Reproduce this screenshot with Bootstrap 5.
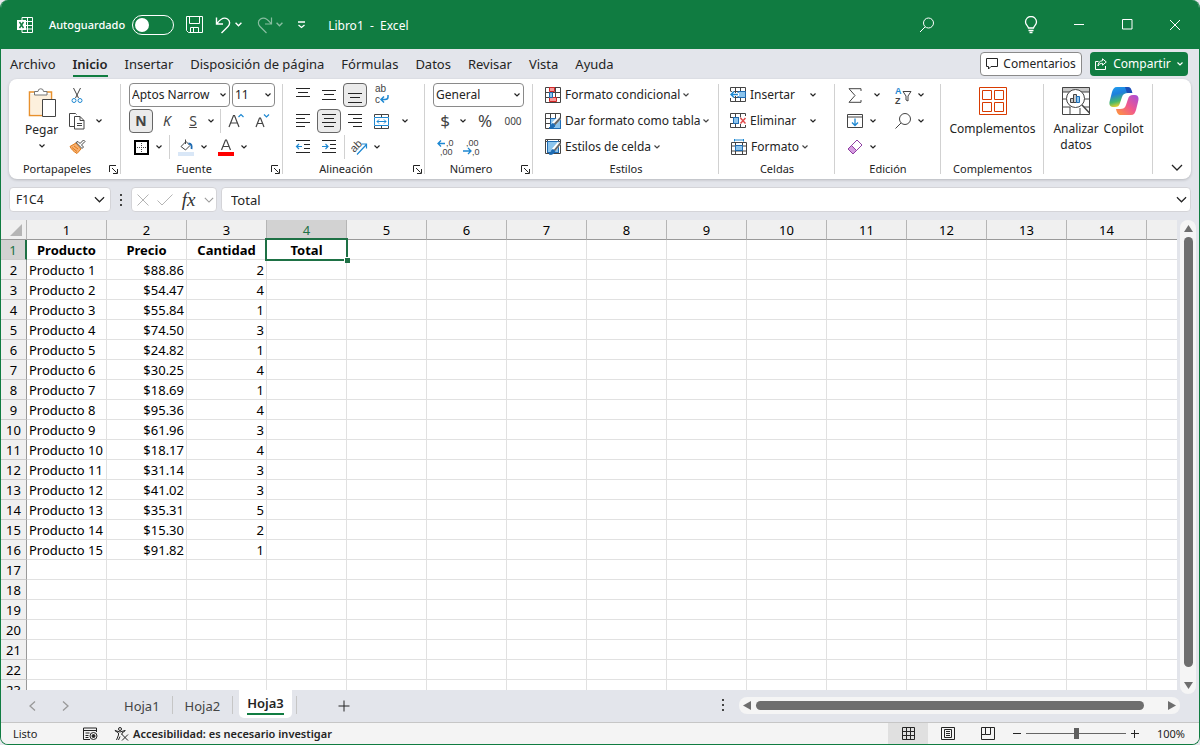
<!DOCTYPE html>
<html lang="es">
<head>
<meta charset="utf-8">
<meta name="viewport" content="width=device-width, initial-scale=1">
<title>Libro1 - Excel</title>
<link href="https://cdn.jsdelivr.net/npm/bootstrap@5.3.0/dist/css/bootstrap.min.css" rel="stylesheet">
<style>
:root { --xl-green:#107c41; --xl-sel:#1e7145; --xl-ink:#242424; --xl-bg:#e3e5eb; --xl-blue:#1e88d2; }
body { font-family:"Noto Sans","Open Sans",sans-serif; font-size:12px; line-height:16px; color:var(--xl-ink); background:#e8e8ee; }
button, input, select { font:inherit; color:inherit; }
button { border:0; background:none; padding:0; }
svg { display:block; flex:none; fill:none; stroke:currentColor; }
.win { height:100vh; background:var(--xl-bg); border:1px solid var(--xl-green); border-top:0; border-radius:8px; overflow:hidden; }
.titlebar { background:var(--xl-green); height:49px; margin:0 -1px; padding-right:1px; color:#fff; flex:none; }
.autosave { font-size:11px; font-weight:500; margin-left:15px; }
.toggle { appearance:none; width:42px; height:20px; border:1px solid #fff; border-radius:10px; margin:0 0 0 7px; }
.toggle::before { content:""; display:block; width:14px; height:14px; margin:2px; border-radius:50%; background:#fff; }
.doc-name { margin-left:22px; padding-top:2px; }
.chev-btn { width:12px; height:24px; display:flex; align-items:center; justify-content:center; flex:none; }
.caption-btn { width:48px; height:48px; display:flex; align-items:center; justify-content:center; }
.search-btn { margin-right:56px; }

.menubar { height:30px; font-size:13px; line-height:20px; padding:0 3px 0 9px; flex:none; }
.menus { gap:17px; padding-top:2px; }
.menubar a { color:var(--xl-ink); text-decoration:none; padding-bottom:1px; border-bottom:2px solid transparent; white-space:nowrap; }
.menubar a.current { font-weight:600; border-color:var(--xl-green); }
.pill { height:24px; border-radius:4px; display:flex; align-items:center; padding:0 5px; gap:5px; white-space:nowrap; font-size:12px; }
.pill-line { background:#fff; border:1px solid #8a8a8a; width:102px; justify-content:center; }
.pill-fill { background:var(--xl-green); color:#fff; width:98px; justify-content:space-between; }

.ribbon { background:#fff; margin:0 8px; height:100px; border-radius:8px; box-shadow:0 1px 3px #0003; flex:none; }
.rgroup { height:94px; margin-top:3px; background:linear-gradient(#d1d1d1,#d1d1d1) right 2px/1px 90px no-repeat; padding:0 8px; display:flex; flex-direction:column; flex:none; }
.rrow { height:26px; display:flex; align-items:center; flex:none; }
.rlabel { margin-top:auto; text-align:center; position:relative; height:14px; line-height:14px; font-size:11px; }
.launch { position:absolute; right:-5px; top:3px; }
.w-clip { width:112px; } .w-font { width:162px; } .w-align { width:142px; } .w-num { width:108px; }
.w-style { width:186px; } .w-cell { width:116px; } .w-edit { width:106px; } .w-add { width:103px; } .w-data { width:109px; }
.ib { width:24px; height:24px; display:flex; align-items:center; justify-content:center; border-radius:4px; flex:none; border:1px solid transparent; }
.ib svg { overflow:visible; }
.ib.on { background:#ebebeb; border-color:#666; }
.ib-k { font-size:14px; color:#444; }
.tiny { font-family:"Liberation Sans",sans-serif; fill:#444; stroke:none; }
.tiny.blue { fill:#1e88d2; }
.vsep { width:1px; height:24px; background:#d1d1d1; flex:none; }
.pick { appearance:none; height:24px; border:1px solid #8a8a8a; border-radius:4px; padding:0 0 0 2px; line-height:20px; background:#fff url("data:image/svg+xml,%3Csvg xmlns='http://www.w3.org/2000/svg' width='6' height='4'%3E%3Cpath d='M.5.5 3 3 5.500.5' fill='none' stroke='%23242424' stroke-width='1.2'/%3E%3C/svg%3E") no-repeat right 3px center; }
.pick-font { width:101px; } .pick-size { width:43px; } .pick-num { width:91px; }
.cmd { display:flex; align-items:center; gap:4px; white-space:nowrap; height:24px; }
.cmd svg { color:#444; }
.cmd svg:last-child { margin-left:-1px; }
.big { display:flex; flex-direction:column; align-items:center; gap:4px; line-height:16px; }
.gap2 { gap:2px; }
.gap2 .chev-btn { margin-left:-2px; }
.gap2 .vsep { margin:0 1px; }
.lead-in { margin-left:12px; }
.big-tall { margin:5px auto 0; gap:6px; }
.data-btns { gap:2px; }
.big-paste { margin:5px 0 0 8px; gap:3px; }
.big-paste svg:last-child { margin-top:3px; }
.clip-tools { margin-left:7px; }
.second-col { margin-left:12px; }
.fs-cur { font-size:17px; color:#444; } .fs-mil { font-size:10px; color:#444; }

.fbar { height:41px; padding:8px 8px 8px; flex:none; }
.fbox { background:#fff; border:1px solid #d4d4d8; border-radius:4px; height:25px; display:flex; align-items:center; }
.fbox input { border:0; outline:0; background:none; min-width:0; flex:1; padding:0 0 0 6px; }
.dots { margin:0 7px 0 7px; }
.namebox { width:102px; padding-right:5px; } .fxbox { width:86px; padding:0 2px 0 5px; } .formula { font-size:13px; margin-left:4px; padding:0 3px; }
.fx-glyph { font:italic 19px/20px "Liberation Serif",serif; color:#333; }

.grid-wrap { flex:1 1 0; min-height:0; }
.sheet-view { flex:1 1 0; min-width:0; overflow:hidden; background:#fff; }
.sheet { table-layout:fixed; border-collapse:separate; border-spacing:0; font-size:13px; line-height:17px; color:#000; width:max-content; }
.sheet th, .sheet td { height:20px; padding:2px 2px 0; border-right:1px solid #e1e1e1; border-bottom:1px solid #e1e1e1; white-space:nowrap; }
.sheet thead th { background:#f0f0f0; border-right-color:#b5b5b5; border-bottom-color:#999; font-weight:400; text-align:center; }
.sheet tbody th { background:#f0f0f0; border-right-color:#999; border-bottom-color:#ccc; font-weight:400; text-align:center; padding:2px 0 0; }
.sheet thead th.hot, .sheet tbody th.hot { background:#d2d2d2; color:var(--xl-sel); }
.sheet tbody th.hot { border-right:2px solid var(--xl-sel); }
.c-head { width:26px; } .c-data { width:80px; }
.sheet td.title { font-weight:700; text-align:center; }
.sheet td.num { text-align:right; }
.sheet td.active { position:relative; }
.frame { position:absolute; inset:-2px; border:2px solid var(--xl-sel); }
.frame::after { content:""; position:absolute; right:-4px; bottom:-4px; width:6px; height:6px; background:var(--xl-sel); border:solid #fff; border-width:1px 0 0 1px; }
.vscroll { width:16px; margin:0 3px -4px; background:#f5f5f5; border-radius:8px; padding:5px 0; gap:5px; }
.thumb-v { width:9px; flex:1; background:#6e6e6e; border-radius:5px; margin-bottom:10px; }
.hscroll { width:441px; height:17px; background:#f5f5f5; border-radius:8px; padding:0 4px; }
.thumb-h { height:9px; flex:1; background:#6e6e6e; border-radius:5px; margin:0 24px 0 5px; }

.tabs { height:33px; border-bottom:1px solid #c6c6c6; font-size:13px; flex:none; }
.stab { height:32px; padding:0 12px; display:flex; align-items:center; color:#444; text-decoration:none; }
.stab.current { background:#fff; height:28px; padding:0 8px; margin:0 4px 0 6px; border-radius:0 0 5px 5px; font-weight:600; color:var(--xl-ink); }
.stab.current span { border-bottom:2px solid var(--xl-green); line-height:20px; }
.tsep { width:1px; height:18px; background:#c6c6c6; margin-top:6px; }
.tab-nav { height:32px; padding-left:28px; gap:26px; width:111px; }
.plus { height:32px; margin-left:41px; }
.hs-wrap { gap:13px; padding:0 19px 2px 0; }

.status { height:21px; background:#f4f4f4; font-size:11px; padding:0 14px 0 12px; flex:none; }
.view { width:40px; height:21px; display:flex; align-items:center; justify-content:center; }
.view.on { background:#e0e0e0; }
.zoom { appearance:none; width:100px; height:12px; background:linear-gradient(#666,#666) center/100% 1px no-repeat; margin:0; }
.zoom::-webkit-slider-thumb { appearance:none; width:5px; height:11px; background:#5f5f5f; }
.ready { width:70px; }
.zbtn { width:8px; margin:0 5px; }
.pct { width:41px; text-align:right; }
.a11y { font-weight:600; }
</style>
</head>
<body>
<svg width="0" height="0" class="position-absolute" aria-hidden="true">
  <symbol id="chev" viewBox="0 0 6 4"><path d="M.5.5 3 3 5.500.5" stroke-width="1.2"/></symbol>
  <symbol id="chev-l" viewBox="0 0 12 7"><path d="M1 1l5 5 5-5" stroke-width="1.3"/></symbol>
  <symbol id="launch" viewBox="0 0 9 9"><path d="M.5 7V.5H7M3 3l4.500 4.500M8.500 4v4.500H4"/></symbol>
  <symbol id="grid3" viewBox="0 0 16 16"><path d="M.5.500h15v15H.5zM.5 5.500h15M.5 10.500h15M5.500.500v15M10.500.500v15"/></symbol>
</svg>

<div class="win d-flex flex-column">
  <header class="titlebar d-flex align-items-center">
    <svg class="ms-3" width="18" height="18" viewBox="0 0 18 18"><path d="M6 4V1.500h10.500v15H6V14M10 5.500h6.500M10 9.500h6.500M10 13h6.500M11.500 1.500v15"/><path d="M1 4h9v10H1z" fill="#fff" stroke="none"/><path d="M3.500 6l4 6M7.500 6l-4 6" stroke="#107c41" stroke-width="1.400"/></svg>
    <label for="autosave" class="autosave">Autoguardado</label>
    <input id="autosave" type="checkbox" role="switch" class="toggle">
    <button class="ms-2 ps-1" aria-label="Guardar"><svg width="17" height="17" viewBox="0 0 17 17"><path d="M.5.500h16v16H2.500l-2-2zM3.500.500v7h10v-7M4.500 16.500v-5h8v5M7.500 12v4.500"/></svg></button>
    <button class="ms-2 ps-1" aria-label="Deshacer"><svg width="17" height="18" viewBox="0 0 17 18"><path d="M1.500 1.500v6.500h6.500M2 7.500C5 3.500 9 .8 12.500 3c3 2 2.500 5.500.5 7.500L6.500 17" stroke-width="1.400"/></svg></button>
    <button class="chev-btn" aria-label="Opciones de deshacer"><svg width="7" height="5"><use href="#chev"/></svg></button>
    <button class="ms-2 ps-1 opacity-50" aria-label="Rehacer" disabled><svg width="17" height="18" viewBox="0 0 17 18"><path d="M15.500 1.500v6.500H9M15 7.500C12 3.500 8 .8 4.500 3c-3 2-2.500 5.500-.5 7.500l6.500 6.500" stroke="#fff" stroke-width="1.200"/></svg></button>
    <button class="chev-btn opacity-50" aria-label="Opciones de rehacer"><svg width="7" height="5"><use href="#chev"/></svg></button>
    <button class="ms-2 ps-1" aria-label="Personalizar barra"><svg width="9" height="8" viewBox="0 0 9 8"><path d="M1 1h7M1.500 4l3 2.500 3-2.500" stroke-width="1.300"/></svg></button>
    <div class="doc-name">Libro1 &nbsp;-&nbsp; Excel</div>
    <div class="ms-auto d-flex align-items-center">
      <button class="caption-btn search-btn" aria-label="Buscar"><svg width="16" height="16" viewBox="0 0 16 16"><circle cx="9.500" cy="6" r="5"/><path d="M6 10L1 15"/></svg></button>
      <button class="caption-btn" aria-label="Ideas"><svg width="14" height="18" viewBox="0 0 14 18"><path d="M4.500 12C4 9.800 1.500 9 1.500 6a5.500 5.500 0 0111 0c0 3-2.500 3.800-3 6zM4.500 14.500h5M5.500 16.500h3" stroke-width="1.300"/></svg></button>
      <button class="caption-btn" aria-label="Minimizar"><svg width="10" height="2" viewBox="0 0 10 2"><path d="M0 .500h10"/></svg></button>
      <button class="caption-btn" aria-label="Maximizar"><svg width="11" height="11" viewBox="0 0 11 11"><path d="M.500.500h9.500v9.500H.500z"/></svg></button>
      <button class="caption-btn" aria-label="Cerrar"><svg width="12" height="12" viewBox="0 0 12 12"><path d="M1 1l10 10M11 1L1 11"/></svg></button>
    </div>
  </header>

  <nav class="menubar d-flex align-items-center">
    <div class="d-flex menus">
      <a href="#">Archivo</a><a href="#" class="current">Inicio</a><a href="#">Insertar</a><a href="#">Disposición de página</a><a href="#">Fórmulas</a><a href="#">Datos</a><a href="#">Revisar</a><a href="#">Vista</a><a href="#">Ayuda</a>
    </div>
    <div class="ms-auto d-flex gap-2 me-2">
      <button class="pill pill-line"><svg width="12" height="12" viewBox="0 0 12 12"><path d="M.5.500h11v8H5l-2.500 2.500V8.500h-2z"/></svg>Comentarios</button>
      <button class="pill pill-fill"><svg width="12" height="12" viewBox="0 0 12 12"><path d="M3.500 3.500h-3v8h10V8M7.500.800L11.300 4 7.500 7.200V5.300C5.500 5.300 4 6 3 8c0-3 1.500-5 4.500-5.300z"/></svg>Compartir <svg width="6" height="4"><use href="#chev"/></svg></button>
    </div>
  </nav>

  <section class="ribbon d-flex">
    <div class="rgroup w-clip">
      <div class="d-flex align-items-start">
        <button class="big big-paste"><svg width="30" height="32" viewBox="0 0 30 32"><path d="M8 5H2.500v23.500H15M20 5h4.500v8" stroke="#e8912d" stroke-width="1.500"/><path d="M4 7v20h11V12h8V7z" fill="#fdf0dd" stroke="none"/><path d="M7.500 8V4.500h3.500a2.500 2.500 0 015.500 0H20V8z" fill="#fff" stroke="#777"/><path d="M15.500 12.500h13v17h-13z" fill="#fff" stroke="#444"/></svg><span>Pegar</span><svg width="6" height="4"><use href="#chev"/></svg></button>
        <div class="clip-tools">
          <div class="rrow"><button class="ib" aria-label="Cortar"><svg width="12" height="17" viewBox="0 0 12 17"><path d="M2.500 1l5 10M9.500 1l-5 10" stroke="#444"/><circle cx="3" cy="13.500" r="2" stroke="#1e88d2"/><circle cx="9" cy="13.500" r="2" stroke="#1e88d2"/></svg></button></div>
          <div class="rrow"><button class="ib" aria-label="Copiar"><svg width="16" height="17" viewBox="0 0 16 17"><path d="M5 13.500H.5V.500h6l1 1M5.500 3.500h5.500l4 4v8.500H5.500zM11 3.500v4h4M8 10.500h5M8 12.500h5" stroke="#444"/></svg></button><button class="chev-btn ms-1" aria-label="Opciones de copiar"><svg width="6" height="4"><use href="#chev"/></svg></button></div>
          <div class="rrow"><button class="ib" aria-label="Copiar formato"><svg width="17" height="16" viewBox="0 0 17 16"><path d="M7 4L1 7.500c1.500 3 3.500 5 7 7L12 10z" fill="#f7b070" stroke="#e07b1a"/><path d="M3 8.500l5 4M5 7l4 3" stroke="#e07b1a"/><path d="M7 3.500l6 6 1.500-1.500-2-2L16 2.500 14.500 1 11 4.500l-2-2z" fill="#fff" stroke="#444"/></svg></button></div>
        </div>
      </div>
      <div class="rlabel pe-3">Portapapeles<svg class="launch" width="9" height="9"><use href="#launch"/></svg></div>
    </div>

    <div class="rgroup w-font">
      <div class="rrow gap2"><select class="pick pick-font" aria-label="Fuente"><option>Aptos Narrow</option></select><select class="pick pick-size" aria-label="Tamaño"><option>11</option></select></div>
      <div class="rrow gap2"><button class="ib ib-k on fw-bold">N</button><button class="ib ib-k fst-italic">K</button><button class="ib ib-k text-decoration-underline">S</button><button class="chev-btn" aria-label="Subrayado"><svg width="6" height="4"><use href="#chev"/></svg></button><span class="vsep"></span><button class="ib" aria-label="Aumentar fuente"><svg width="16" height="15" viewBox="0 0 16 15"><path d="M1 13L5.500 1.500h1L11 13M2.500 9h7" stroke="#444" stroke-width="1.200"/><path d="M10.500 3L13 .5 15.500 3" stroke="#1e88d2" stroke-width="1.200"/></svg></button><button class="ib" aria-label="Disminuir fuente"><svg width="16" height="15" viewBox="0 0 16 15"><path d="M2 13L5.500 4h1L10 13M3 9.500h6" stroke="#444" stroke-width="1.200"/><path d="M10 .5L12.500 3 15 .5" stroke="#1e88d2" stroke-width="1.200"/></svg></button></div>
      <div class="rrow"><button class="ib" aria-label="Bordes"><svg width="15" height="15" viewBox="0 0 15 15"><path d="M1 1h13v13H1z" stroke="#000" stroke-width="2"/><path d="M7.500 3v9M3 7.500h9" stroke="#444" stroke-dasharray="1 1"/></svg></button><button class="chev-btn" aria-label="Opciones de bordes"><svg width="6" height="4"><use href="#chev"/></svg></button><span class="vsep mx-1"></span><button class="ib" aria-label="Color de relleno"><svg width="16" height="17" viewBox="0 0 16 17"><path d="M3 7.500l5-5 4 4L7.500 11zM7.500 5V.500" stroke="#444"/><path d="M10.500 4.500c3 0 3.500 2 3 5.500" stroke="#1e6cb4" stroke-width="1.800"/><path d="M0 13h16v4H0z" fill="#d9e7f7" stroke="none"/></svg></button><button class="chev-btn" aria-label="Opciones de relleno"><svg width="6" height="4"><use href="#chev"/></svg></button><button class="ib ms-1" aria-label="Color de fuente"><svg width="16" height="17" viewBox="0 0 16 17"><path d="M3.500 11L7.500 1h1l4 10M5 7.500h6" stroke="#444" stroke-width="1.200"/><path d="M0 13h16v4H0z" fill="#f00" stroke="none"/></svg></button><button class="chev-btn" aria-label="Opciones de color"><svg width="6" height="4"><use href="#chev"/></svg></button></div>
      <div class="rlabel pe-3">Fuente<svg class="launch" width="9" height="9"><use href="#launch"/></svg></div>
    </div>

    <div class="rgroup w-align">
      <div class="rrow gap2"><button class="ib" aria-label="Arriba"><svg width="14" height="14" viewBox="0 0 14 14"><path d="M0 .500h14M2 4.500h10M0 8.500h14"/></svg></button><button class="ib" aria-label="Medio"><svg width="14" height="14" viewBox="0 0 14 14"><path d="M0 2.500h14M2 6.500h10M0 11.500h14"/></svg></button><button class="ib on" aria-label="Abajo"><svg width="14" height="14" viewBox="0 0 14 14"><path d="M0 5.500h14M2 9.500h10M0 14.500h14"/></svg></button><button class="ib" aria-label="Ajustar texto"><svg width="16" height="18" viewBox="0 0 16 18"><text x="2" y="6" font-size="10" class="tiny">ab</text><text x="2" y="17" font-size="10" class="tiny">c</text><path d="M15 9v2q0 2.500-3 2.500H8M11 10.500l-3 3 3 3" stroke="#1e88d2" stroke-width="1.500"/></svg></button></div>
      <div class="rrow gap2"><button class="ib" aria-label="Izquierda"><svg width="14" height="14" viewBox="0 0 14 14"><path d="M0 .500h14M0 4.500h9M0 8.500h14M0 12.500h9"/></svg></button><button class="ib on" aria-label="Centro"><svg width="14" height="14" viewBox="0 0 14 14"><path d="M0 .500h14M2 4.500h10M0 8.500h14M2 12.500h10"/></svg></button><button class="ib" aria-label="Derecha"><svg width="14" height="14" viewBox="0 0 14 14"><path d="M0 .500h14M5 4.500h9M0 8.500h14M5 12.500h9"/></svg></button><button class="ib" aria-label="Combinar"><svg width="15" height="15" viewBox="0 0 15 15"><path d="M.5 3V.500h14V3M.5 12v2.500h14V12M7.500.500V3M7.500 12v2.500" stroke="#444"/><path d="M.500 3.500h14v8H.500zM3 7.500h9M5 5.500l-2 2 2 2M10 5.500l2 2-2 2" stroke="#1e88d2"/></svg></button><button class="chev-btn ms-1" aria-label="Opciones de combinar"><svg width="6" height="4"><use href="#chev"/></svg></button></div>
      <div class="rrow gap2"><button class="ib" aria-label="Disminuir sangría"><svg width="14" height="14" viewBox="0 0 14 14"><path d="M0 .500h14M8 4.500h6M8 8.500h6M0 12.500h14"/><path d="M6 6.500H.800M3 4L.500 6.500 3 9" stroke="#1e88d2" stroke-width="1.200"/></svg></button><button class="ib" aria-label="Aumentar sangría"><svg width="14" height="14" viewBox="0 0 14 14"><path d="M0 .500h14M8 4.500h6M8 8.500h6M0 12.500h14"/><path d="M0 6.500h5.500M3.500 4L6 6.500 3.500 9" stroke="#1e88d2" stroke-width="1.200"/></svg></button><span class="vsep me-0"></span><button class="ib" aria-label="Orientación"><svg width="17" height="16" viewBox="0 0 17 16"><text x="0" y="12" font-size="11" class="tiny" transform="rotate(-45 4 9)">ab</text><path d="M6 15.500l9.500-10M11 5h4.500v4.500" stroke="#1e88d2" stroke-width="1.200"/></svg></button><button class="chev-btn" aria-label="Opciones de orientación"><svg width="6" height="4"><use href="#chev"/></svg></button></div>
      <div class="rlabel pe-3">Alineación<svg class="launch" width="9" height="9"><use href="#launch"/></svg></div>
    </div>

    <div class="rgroup w-num">
      <div class="rrow"><select class="pick pick-num" aria-label="Formato de número"><option>General</option></select></div>
      <div class="rrow"><button class="ib fs-cur">$</button><button class="chev-btn" aria-label="Moneda"><svg width="6" height="4"><use href="#chev"/></svg></button><button class="ib fs-cur ms-1">%</button><button class="ib fs-mil ms-1">000</button></div>
      <div class="rrow gap2"><button class="ib" aria-label="Aumentar decimales"><svg width="17" height="16" viewBox="0 0 17 16"><text x="9" y="7" font-size="9" class="tiny">,0</text><text x="3" y="16" font-size="9" class="tiny">,00</text><path d="M8 4.500H1M4 1.500l-3 3 3 3" stroke="#1e88d2" stroke-width="1.300"/></svg></button><button class="ib" aria-label="Disminuir decimales"><svg width="17" height="16" viewBox="0 0 17 16"><text x="3" y="7" font-size="9" class="tiny">,00</text><text x="9" y="16" font-size="9" class="tiny">,0</text><path d="M0 12h8M5 9l3 3-3 3" stroke="#1e88d2" stroke-width="1.300"/></svg></button></div>
      <div class="rlabel pe-3">Número<svg class="launch" width="9" height="9"><use href="#launch"/></svg></div>
    </div>

    <div class="rgroup w-style px-0">
      <div class="rrow"><button class="cmd lead-in"><svg width="16" height="16" viewBox="0 0 16 16"><use href="#grid3"/><path d="M4.500.500h5v4h-5zM4.500 10.500h7v4h-7z" fill="#f59a9a" stroke="#d12626"/><path d="M4.500 5.500h3v5h-3z" fill="#8cc4ec" stroke="#1e6cb4"/></svg>Formato condicional<svg width="6" height="4"><use href="#chev"/></svg></button></div>
      <div class="rrow"><button class="cmd lead-in"><svg width="16" height="16" viewBox="0 0 16 16"><use href="#grid3"/><path d="M5.500 5.500h10v10h-10z" fill="#8cc4ec" stroke="#1e6cb4"/><path d="M14.500 5l-6 6" stroke="#fff" stroke-width="4"/><path d="M15.500 5l-6 6.500" stroke="#666" stroke-width="2"/><path d="M9 11q2 2-.500 3.500T4 15q2-1 2.500-3T9 11z" fill="#1e6cb4" stroke="#1e6cb4"/></svg>Dar formato como tabla<svg width="6" height="4"><use href="#chev"/></svg></button></div>
      <div class="rrow"><button class="cmd lead-in"><svg width="16" height="16" viewBox="0 0 16 16"><path d="M.5.5h15v14H.5zM2.500.5v14M13.500.5v14M.5 2.500h15"/><path d="M2.500 2.500h11v11h-11z" fill="#8cc4ec" stroke="#1e6cb4"/><path d="M14.500 4l-6 7" stroke="#fff" stroke-width="4"/><path d="M15.500 4l-6 7.500" stroke="#666" stroke-width="2"/><path d="M9 11q2 2-.500 3.500T4 15q2-1 2.500-3T9 11z" fill="#1e6cb4" stroke="#1e6cb4"/></svg>Estilos de celda<svg width="6" height="4"><use href="#chev"/></svg></button></div>
      <div class="rlabel">Estilos</div>
    </div>

    <div class="rgroup w-cell px-0">
      <div class="rrow"><button class="cmd lead-in"><svg width="16" height="16" viewBox="0 0 16 16"><path d="M.5 4V.500h15v14H.500V11M5.500.500v14M10.500.500v14M.500 4.500h15M3 10.500h12.500"/><path d="M8 4.500h7.500v6H8z" fill="#8cc4ec" stroke="#1e6cb4"/><path d="M9 7.500H1M4 4.500l-3 3 3 3" stroke="#fff" stroke-width="3"/><path d="M8 7.500H1M4 4.500l-3 3 3 3" stroke="#1e88d2" stroke-width="1.500"/></svg>Insertar</button><button class="chev-btn ms-auto me-3" aria-label="Opciones de insertar"><svg width="6" height="4"><use href="#chev"/></svg></button></div>
      <div class="rrow"><button class="cmd lead-in"><svg width="16" height="16" viewBox="0 0 16 16"><path d="M.5 4V.500h15V3M5.500.500v4M10.500.500v4M0 4.500h9M0 10.500h9M.500 11v3.500h15V12M5.500 11v3.500M10.500 11v3.500"/><path d="M3.500 4.500h5v6h-5z" fill="#8cc4ec" stroke="#1e6cb4"/><path d="M10.500 5l5 5.500M15.500 5l-5 5.500" stroke="#e04848" stroke-width="1.500"/></svg>Eliminar</button><button class="chev-btn ms-auto me-3" aria-label="Opciones de eliminar"><svg width="6" height="4"><use href="#chev"/></svg></button></div>
      <div class="rrow"><button class="cmd lead-in"><svg width="16" height="16" viewBox="0 0 16 16"><path d="M.500 3.500h15v12H.500zM.500 7h15M.500 12h15M4.500 3.500v12M11.500 3.500v12"/><path d="M4.500 6.500h7v5h-7z" fill="#8cc4ec" stroke="#1e6cb4"/><path d="M3.500 1h9M3.500 0v2.500M12.500 0v2.500" stroke="#1e88d2"/></svg>Formato<svg width="6" height="4"><use href="#chev"/></svg></button></div>
      <div class="rlabel">Celdas</div>
    </div>

    <div class="rgroup w-edit">
      <div class="rrow"><button class="ib" aria-label="Autosuma"><svg width="14" height="15" viewBox="0 0 14 15"><path d="M13 3V.700H1l6 6.800-6 6.800h12V12" stroke="#444"/></svg></button><button class="chev-btn ms-1" aria-label="Opciones de suma"><svg width="6" height="4"><use href="#chev"/></svg></button><button class="ib ms-2" aria-label="Ordenar y filtrar"><svg width="17" height="17" viewBox="0 0 17 17"><text x="0" y="7" font-size="9" font-weight="700" class="tiny blue">A</text><text x="0" y="17" font-size="9" font-weight="700" class="tiny">Z</text><path d="M8 4.500h8L13 9v5l-2-1V9z" stroke="#444"/></svg></button><button class="chev-btn" aria-label="Opciones de orden"><svg width="6" height="4"><use href="#chev"/></svg></button></div>
      <div class="rrow"><button class="ib" aria-label="Rellenar"><svg width="16" height="14" viewBox="0 0 16 14"><path d="M.500.500h15v13H.500zM.500 3h15" stroke="#444"/><path d="M8 4.500v7M5 8.500l3 3 3-3" stroke="#1e88d2" stroke-width="1.300"/></svg></button><button class="chev-btn" aria-label="Opciones de relleno"><svg width="6" height="4"><use href="#chev"/></svg></button><button class="ib second-col" aria-label="Buscar y seleccionar"><svg width="16" height="16" viewBox="0 0 16 16"><circle cx="10" cy="6" r="5.500" stroke="#444"/><path d="M6 10L.500 15.500" stroke="#444"/></svg></button><button class="chev-btn" aria-label="Opciones de búsqueda"><svg width="6" height="4"><use href="#chev"/></svg></button></div>
      <div class="rrow"><button class="ib" aria-label="Borrar"><svg width="16" height="16" viewBox="0 0 16 16"><path d="M10 1l5 5-9 9-5-5z" fill="#fff" stroke="#8f3ea3"/><path d="M4.500 6.500l5 5L6 15l-5-5z" fill="#d59be0" stroke="#8f3ea3"/></svg></button><button class="chev-btn" aria-label="Opciones de borrar"><svg width="6" height="4"><use href="#chev"/></svg></button></div>
      <div class="rlabel">Edición</div>
    </div>

    <div class="rgroup w-add">
      <button class="big big-tall"><svg width="28" height="28" viewBox="0 0 28 28"><path d="M.500.500h27v27H.500zM3.500 3.500h9v9h-9zM15.500 3.500h9v9h-9zM3.500 15.500h9v9h-9zM15.500 15.500h9v9h-9z" stroke="#d83b01"/></svg>Complementos</button>
      <div class="rlabel">Complementos</div>
    </div>

    <div class="rgroup w-data">
      <div class="d-flex data-btns">
        <button class="big big-tall"><svg width="28" height="28" viewBox="0 0 28 28"><path d="M0 0h28v5H0z" fill="#c8c8c8" stroke="none"/><path d="M.500.500h27v27H.500zM.500 5h27M.500 12h5M.500 20h8M8 20v7M18 21v6M22 12h5.500M22 20h5" stroke="#444"/><circle cx="13.500" cy="11.500" r="9" fill="#fff" stroke="#444"/><path d="M20 18l7.500 8" stroke="#444" stroke-width="1.500"/><path d="M8.500 11.500h3v4h-3zM11.500 7.500h3v8h-3z" fill="#c8c8c8" stroke="#444"/><path d="M14.500 9.500h3v6h-3z" fill="#8cc4ec" stroke="#1e6cb4"/></svg><span>Analizar<br>datos</span></button>
        <button class="big big-tall"><svg width="30" height="28" viewBox="0 0 30 28"><defs><linearGradient id="ca" x2="0.300" y2="1"><stop offset="0" stop-color="#1fa0f0"/><stop offset=".4" stop-color="#1f7fdc"/><stop offset=".75" stop-color="#47b96b"/><stop offset="1" stop-color="#f0cf2c"/></linearGradient><linearGradient id="cb" x1="1" x2="0" y2="1"><stop offset="0" stop-color="#a64ddb"/><stop offset=".5" stop-color="#f0588e"/><stop offset="1" stop-color="#ff9c38"/></linearGradient></defs><g stroke="none"><path d="M8 0h10c3 0 4 2 5 6h-4c-3 0-5 1-6 4l-2 6c-1 3-2 4-5 4H4c-4 0-4-4-3-7L3 5c1-3 2-5 5-5z" fill="url(#ca)"/><path d="M16 0h3c3 0 3.500 3 4.500 6H18z" fill="#1d4fb8"/><path d="M22 28H12c-3 0-4-2-5-6h4c3 0 5-1 6-4l2-6c1-3 2-4 5-4h2c4 0 4 4 3 7l-2 8c-1 3-2 5-5 5z" fill="url(#cb)"/></g></svg>Copilot</button>
      </div>
    </div>
    <button class="ms-auto me-2 mt-auto mb-2" aria-label="Contraer cinta"><svg width="12" height="7"><use href="#chev-l"/></svg></button>
  </section>

  <div class="fbar d-flex align-items-center">
    <div class="fbox namebox"><input aria-label="Cuadro de nombres" value="F1C4"><svg width="11" height="7"><use href="#chev-l"/></svg></div>
    <svg class="dots" width="6" height="12" viewBox="0 0 6 12"><path d="M2 0h2v2H2zM2 5h2v2H2zM2 10h2v2H2z" fill="#444" stroke="none"/></svg>
    <div class="fbox fxbox justify-content-between">
      <button aria-label="Cancelar"><svg width="12" height="12" viewBox="0 0 12 12"><path d="M.500.500l11 11M11.500.500l-11 11" stroke="#b5b5b5"/></svg></button>
      <button aria-label="Introducir"><svg width="16" height="12" viewBox="0 0 16 12"><path d="M.500 6.500L5 11 15.500.500" stroke="#b5b5b5"/></svg></button>
      <button class="fx-glyph">fx</button>
      <svg width="10" height="6" color="#999"><use href="#chev-l"/></svg>
    </div>
    <div class="fbox flex-grow-1 formula"><input aria-label="Barra de fórmulas" value="Total"><svg width="11" height="7"><use href="#chev-l"/></svg></div>
  </div>

  <main class="grid-wrap d-flex">
    <div class="sheet-view"><table class="sheet" id="sheet"></table></div>
    <div class="vscroll d-flex flex-column align-items-center">
      <svg width="9" height="7" viewBox="0 0 9 7"><path d="M4.500 0L9 7H0z" fill="#6e6e6e" stroke="none"/></svg>
      <div class="thumb-v"></div>
      <svg width="9" height="7" viewBox="0 0 9 7"><path d="M4.500 7L9 0H0z" fill="#6e6e6e" stroke="none"/></svg>
    </div>
  </main>

  <div class="tabs d-flex align-items-start">
    <div class="d-flex align-items-center tab-nav"><button aria-label="Hoja anterior"><svg width="7" height="10" viewBox="0 0 7 10"><path d="M6 .500L1 5l5 4.500" stroke="#999" stroke-width="1.300"/></svg></button><button aria-label="Hoja siguiente"><svg width="7" height="10" viewBox="0 0 7 10"><path d="M1 .500L6 5 1 9.500" stroke="#999" stroke-width="1.300"/></svg></button></div>
    <a class="stab" href="#">Hoja1</a><span class="tsep"></span><a class="stab" href="#">Hoja2</a><span class="tsep"></span><a class="stab current" href="#"><span>Hoja3</span></a><span class="tsep"></span>
    <button class="plus" aria-label="Hoja nueva"><svg width="12" height="12" viewBox="0 0 12 12"><path d="M6 .500v11M.500 6h11"/></svg></button>
    <div class="ms-auto d-flex align-items-center h-100 hs-wrap">
      <svg width="6" height="12" viewBox="0 0 6 12"><path d="M2 0h2v2H2zM2 5h2v2H2zM2 10h2v2H2z" fill="#444" stroke="none"/></svg>
      <div class="hscroll d-flex align-items-center">
        <svg width="8" height="9" viewBox="0 0 8 9"><path d="M8 0v9L0 4.500z" fill="#6e6e6e" stroke="none"/></svg>
        <div class="thumb-h"></div>
        <svg width="8" height="9" viewBox="0 0 8 9"><path d="M0 0v9l8-4.500z" fill="#6e6e6e" stroke="none"/></svg>
      </div>
    </div>
  </div>

  <footer class="status d-flex align-items-center">
    <span class="ready">Listo</span>
    <svg width="15" height="14" viewBox="0 0 15 14"><path d="M7 12.500H.500V1h13v4M.500 3.500h13M2.500 6h4M2.500 8.500h3M2.500 10.500h3"/><circle cx="10.500" cy="9" r="3.500"/><circle cx="10.500" cy="9" r="1.500" fill="#242424"/></svg>
    <svg class="ms-3 me-1" width="15" height="14" viewBox="0 0 15 14"><circle cx="6" cy="2" r="1.500"/><path d="M1 3.500q5 3 10 0M.800 3.500L4.500 6v2l-2 5M11.500 3.500L8 6v2M4.500 13L6 9.500M8 7.500l6 6M14 7.500l-6 6"/></svg>
    <span class="a11y">Accesibilidad: es necesario investigar</span>
    <div class="ms-auto d-flex align-items-center">
      <button class="view on" aria-label="Normal"><svg width="13" height="13" viewBox="0 0 13 13"><path d="M.500.500h12v12H.500zM.500 4.500h12M.500 8.500h12M4.500.500v12M8.500.500v12"/></svg></button>
      <button class="view" aria-label="Diseño de página"><svg width="14" height="13" viewBox="0 0 14 13"><path d="M.500.500h13v12H.500zM3.500 2.500h7v8h-7zM5 4.500h4M5 6.500h4M5 8.500h4"/></svg></button>
      <button class="view" aria-label="Salto de página"><svg width="14" height="13" viewBox="0 0 14 13"><path d="M.500.500h13v12H.500zM4.500.500v7h5v-7M.500 7.500h4"/></svg></button>
      <button class="zbtn" aria-label="Alejar"><svg width="8" height="8" viewBox="0 0 8 8"><path d="M0 3.500h8"/></svg></button>
      <input class="zoom" type="range" min="10" max="190" value="100" aria-label="Zoom">
      <button class="zbtn" aria-label="Acercar"><svg width="8" height="8" viewBox="0 0 8 8"><path d="M0 3.500h8M3.500 0v8"/></svg></button>
      <span class="pct">100%</span>
    </div>
  </footer>
</div>

<script src="https://cdn.jsdelivr.net/npm/bootstrap@5.3.0/dist/js/bootstrap.bundle.min.js"></script>
<script>
const titles = ["Producto", "Precio", "Cantidad", "Total"];
const prices = ["88.86","54.47","55.84","74.50","24.82","30.25","18.69","95.36","61.96","18.17","31.14","41.02","35.31","15.30","91.82"];
const units = [2,4,1,3,1,4,1,4,3,4,3,3,5,2,1];
function cell(r, c) {
  if (r === 1 && c <= 4) return c === 4 ? '<td class="title active">Total<span class="frame"></span></td>' : `<td class="title">${titles[c - 1]}</td>`;
  if (r <= 16 && c === 1) return `<td>Producto ${r - 1}</td>`;
  if (r <= 16 && c === 2) return `<td class="num">$${prices[r - 2]}</td>`;
  if (r <= 16 && c === 3) return `<td class="num">${units[r - 2]}</td>`;
  return "<td></td>";
}
/* Only as many columns and rows as the view can show. */
function draw() {
  const table = document.getElementById("sheet"), view = table.parentElement;
  const cols = Math.ceil((view.clientWidth - 26) / 80), rows = Math.ceil((view.clientHeight - 20) / 20);
  let html = '<colgroup><col class="c-head">' + '<col class="c-data">'.repeat(cols) + '</colgroup><thead><tr><th><svg class="ms-auto" width="14" height="13" viewBox="0 0 14 13"><path d="M12 0v12H0z" fill="#b5b5b5" stroke="none"/></svg></th>';
  for (let c = 1; c <= cols; c++) html += `<th${c === 4 ? ' class="hot"' : ""}>${26 + c * 80 - 30 > view.clientWidth ? "" : c}</th>`;
  html += "</tr></thead><tbody>";
  for (let r = 1; r <= rows; r++) {
    html += `<tr><th${r === 1 ? ' class="hot"' : ""}>${r}</th>`;
    for (let c = 1; c <= cols; c++) html += cell(r, c);
    html += "</tr>";
  }
  table.innerHTML = html + "</tbody>";
}
draw();
addEventListener("resize", draw);
</script>
</body>
</html>
